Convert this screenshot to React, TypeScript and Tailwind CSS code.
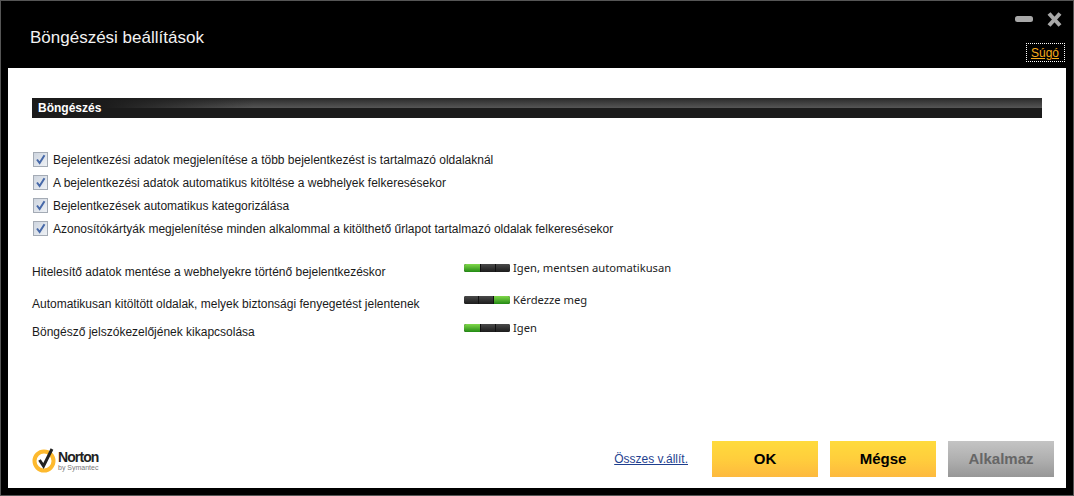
/**
 * Norton browser settings dialog: black window frame, white content panel,
 * checkbox list, three-state sliders and footer buttons.
 */

const CHECK_ITEMS = [
  'Bejelentkezési adatok megjelenítése a több bejelentkezést is tartalmazó oldalaknál',
  'A bejelentkezési adatok automatikus kitöltése a webhelyek felkeresésekor',
  'Bejelentkezések automatikus kategorizálása',
  'Azonosítókártyák megjelenítése minden alkalommal a kitölthető űrlapot tartalmazó oldalak felkeresésekor',
]

const SLIDERS = [
  { label: 'Hitelesítő adatok mentése a webhelyekre történő bejelentkezéskor', value: 'Igen, mentsen automatikusan', active: 0, row: 'h-[32px]' },
  { label: 'Automatikusan kitöltött oldalak, melyek biztonsági fenyegetést jelentenek', value: 'Kérdezze meg', active: 2, row: 'h-[28px]' },
  { label: 'Böngésző jelszókezelőjének kikapcsolása', value: 'Igen', active: 0, row: 'h-[28px]' },
]

function CheckBox() {
  return (
    <span className="flex h-[15px] w-[15px] shrink-0 items-center justify-center border border-[#a4abb5] bg-gradient-to-br from-[#ced5df] to-[#eef1f5]">
      <svg width="11" height="11" viewBox="0 0 11 11">
        <path d="M2 5.5 L4.6 9 L9.5 1.2" fill="none" stroke="#4668a8" strokeWidth="2" />
      </svg>
    </span>
  )
}

function Slider({ active }: { active: number }) {
  return (
    <span className="flex h-[8px] w-[46px] shrink-0 gap-px overflow-hidden rounded-[2px] bg-[#111]">
      {[0, 1, 2].map(i => (
        <span
          key={i}
          className={
            i === active
              ? 'h-full flex-[16] bg-gradient-to-b from-[#7fd84a] to-[#1f8a12]'
              : 'h-full flex-[14] bg-gradient-to-b from-[#4a4a4a] to-[#1c1c1c]'
          }
        />
      ))}
    </span>
  )
}

function NortonLogo() {
  return (
    <div className="flex items-center">
      <svg width="26" height="27" viewBox="0 0 26 27" className="shrink-0">
        <circle cx="12" cy="15" r="9.5" fill="none" stroke="#fdb92e" strokeWidth="4" />
        <path d="M7.5 14 L11.5 20 L20 3" fill="none" stroke="#222" strokeWidth="3" />
      </svg>
      <div className="flex flex-col pt-[3px]">
        <span className="font-['Liberation_Sans',sans-serif] text-[14px] font-bold leading-[14px] tracking-[-0.9px] text-[#222]">Norton</span>
        <span className="font-['Liberation_Sans',sans-serif] text-[7px] leading-[8px] text-[#777]">by Symantec</span>
      </div>
    </div>
  )
}

function FooterButton({ children, disabled }: { children: string; disabled?: boolean }) {
  return (
    <button
      className={`h-[36px] w-[106px] text-[15px] font-bold ${
        disabled
          ? 'bg-gradient-to-b from-[#c4c4c4] via-[#b0b0b0] to-[#979797] text-[#666]'
          : 'bg-gradient-to-b from-[#ffdb3c] via-[#ffce3c] to-[#fdb93e] text-black'
      }`}
    >
      {children}
    </button>
  )
}

export default function App() {
  return (
    <div className="flex h-[496px] w-[1074px] flex-col border border-[#555] bg-black font-['Liberation_Sans',Arial,sans-serif]">
      {/* Title bar */}
      <header className="flex h-[67px] shrink-0 justify-between">
        <h1 className="pl-[29px] pt-[27px] text-[17px] leading-[20px] text-[#f2f2f2]">Böngészési beállítások</h1>
        <div className="flex flex-col items-end pr-[8px] pt-[11px]">
          <div className="mr-[3px] flex items-center gap-[14px]">
            <svg width="18" height="14" viewBox="0 0 18 14">
              <rect x="0" y="3" width="18" height="6" rx="2.5" fill="#a8a8a8" />
            </svg>
            <svg width="15" height="15" viewBox="0 0 15 15">
              <path d="M2 1.5 L13 13.5 M13 1.5 L2 13.5" stroke="#a8a8a8" strokeWidth="4" />
            </svg>
          </div>
          <a className="mt-[16px] border border-dotted border-white pb-[1px] pl-[4px] pr-[5px] pt-[3px] text-[12px] leading-[13px] text-[#f5ab1b] underline">Súgó</a>
        </div>
      </header>

      {/* Content panel */}
      <main className="mx-[7px] flex h-[420px] flex-col bg-white px-[24px]">
        <h2 className="mt-[30px] flex h-[20px] items-center bg-[linear-gradient(to_right,#1b1b1b_0%,#1b1b1b_7%,transparent_22%),linear-gradient(to_bottom,#2a2a2a_0%,#555_50%,#1b1b1b_50%,#1b1b1b_100%)] pl-[6px] text-[12px] font-bold text-white">
          Böngészés
        </h2>

        <ul className="mt-[30px] flex flex-col">
          {CHECK_ITEMS.map(item => (
            <li key={item} className="flex h-[23px] items-center gap-[5px] pl-px text-[12px] text-[#1a1a1a]">
              <CheckBox />
              {item}
            </li>
          ))}
        </ul>

        <div className="mt-[19px] flex flex-col">
          {SLIDERS.map(s => (
            <div key={s.label} className={`flex items-start ${s.row}`}>
              <span className="w-[432px] shrink-0 pt-[6px] text-[12px] leading-[14px] text-[#1a1a1a]">{s.label}</span>
              <span className="flex items-center gap-[3px] pt-[1px]">
                <Slider active={s.active} />
                <span className="font-['Noto_Sans',sans-serif] text-[11.2px] leading-[16px] text-[#222]">{s.value}</span>
              </span>
            </div>
          ))}
        </div>

        {/* Footer */}
        <footer className="mb-[11px] mt-auto flex items-center">
          <NortonLogo />
          <a className="ml-auto mr-[24px] text-[12px] text-[#1f3f8f] underline">Összes v.állít.</a>
          <div className="-mr-[12px] flex gap-[12px]">
            <FooterButton>OK</FooterButton>
            <FooterButton>Mégse</FooterButton>
            <FooterButton disabled>Alkalmaz</FooterButton>
          </div>
        </footer>
      </main>
    </div>
  )
}
